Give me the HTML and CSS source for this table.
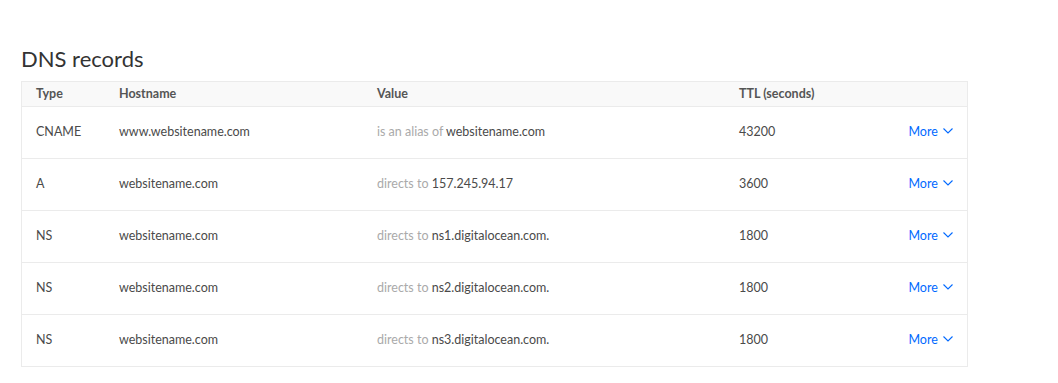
FILE: index.html
```html
<!DOCTYPE html>
<html>
<head>
    <title>DNS records</title>
    <link rel="stylesheet" href="styles.css">
</head>
<body>
    <div class="container">
        <h2 class="title">DNS records</h2>

        <table class="records">
            <thead>
                <tr>
                    <th class="col-type">Type</th>
                    <th class="col-host">Hostname</th>
                    <th class="col-value">Value</th>
                    <th class="col-ttl">TTL (seconds)</th>
                    <th class="col-more"></th>
                </tr>
            </thead>
            <tbody>
                <tr>
                    <td>CNAME</td>
                    <td>www.websitename.com</td>
                    <td><span class="muted">is an alias of</span> websitename.com</td>
                    <td>43200</td>
                    <td class="more"><a href="#">More <svg class="chev" width="10" height="6" viewBox="0 0 10 6"><path d="M0.5 0.5 L5 5 L9.5 0.5" fill="none" stroke="currentColor" stroke-width="1.1"/></svg></a></td>
                </tr>
                <tr>
                    <td>A</td>
                    <td>websitename.com</td>
                    <td><span class="muted">directs to</span> 157.245.94.17</td>
                    <td>3600</td>
                    <td class="more"><a href="#">More <svg class="chev" width="10" height="6" viewBox="0 0 10 6"><path d="M0.5 0.5 L5 5 L9.5 0.5" fill="none" stroke="currentColor" stroke-width="1.1"/></svg></a></td>
                </tr>
                <tr>
                    <td>NS</td>
                    <td>websitename.com</td>
                    <td><span class="muted">directs to</span> ns1.digitalocean.com.</td>
                    <td>1800</td>
                    <td class="more"><a href="#">More <svg class="chev" width="10" height="6" viewBox="0 0 10 6"><path d="M0.5 0.5 L5 5 L9.5 0.5" fill="none" stroke="currentColor" stroke-width="1.1"/></svg></a></td>
                </tr>
                <tr>
                    <td>NS</td>
                    <td>websitename.com</td>
                    <td><span class="muted">directs to</span> ns2.digitalocean.com.</td>
                    <td>1800</td>
                    <td class="more"><a href="#">More <svg class="chev" width="10" height="6" viewBox="0 0 10 6"><path d="M0.5 0.5 L5 5 L9.5 0.5" fill="none" stroke="currentColor" stroke-width="1.1"/></svg></a></td>
                </tr>
                <tr>
                    <td>NS</td>
                    <td>websitename.com</td>
                    <td><span class="muted">directs to</span> ns3.digitalocean.com.</td>
                    <td>1800</td>
                    <td class="more"><a href="#">More <svg class="chev" width="10" height="6" viewBox="0 0 10 6"><path d="M0.5 0.5 L5 5 L9.5 0.5" fill="none" stroke="currentColor" stroke-width="1.1"/></svg></a></td>
                </tr>
            </tbody>
        </table>
    </div>
</body>
</html>
```

FILE: styles.css
```css
body {
    font-family: Lato, "Liberation Sans", sans-serif;
    margin: 0;
    background: white;
    color: #444;
}
.container {
    padding: 46px 0 0 21px;
}
.title {
    font-size: 22px;
    font-weight: 400;
    color: #333;
    margin: 0 0 9px 0;
    line-height: 26px;
}
.records {
    width: 947px;
    border-collapse: collapse;
    border: 1px solid #ebebeb;
    font-size: 12.5px;
    table-layout: fixed;
}
.records th {
    background: #f9f9f9;
    text-align: left;
    font-weight: 700;
    color: #555;
    height: 22px;
    padding: 0 0 2px 0;
    border-bottom: 1px solid #ebebeb;
}
.records td {
    height: 49px;
    padding: 0 0 2px 0;
    border-bottom: 1px solid #ebebeb;
    color: #4a4a4a;
}
.records tr:last-child td {
    border-bottom: none;
}
.records th:first-child,
.records td:first-child {
    padding-left: 14px;
}
.col-type { width: 83px; }
.col-host { width: 258px; }
.col-value { width: 362px; }
.col-ttl { width: 140px; }
.muted {
    color: #aaa;
}
.more {
    text-align: right;
    padding-right: 14px !important;
}
.more a {
    color: #0069ff;
    text-decoration: none;
}
.chev {
    margin-left: 2px;
    vertical-align: 2px;
}
```
